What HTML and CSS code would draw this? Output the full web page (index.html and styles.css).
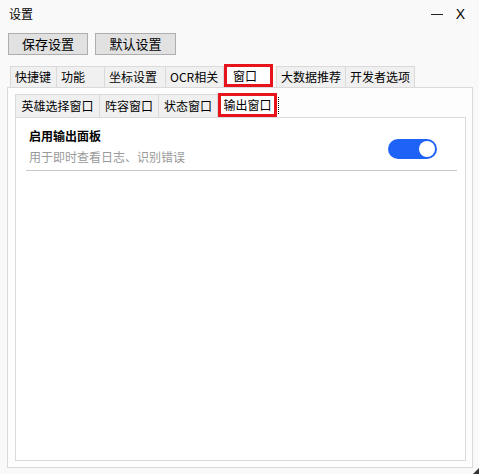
FILE: index.html
```html
<!DOCTYPE html>
<html lang="zh">
<head>
    <meta charset="UTF-8">
    <title>设置</title>
    <link rel="stylesheet" href="styles.css">
</head>
<body>
    <div class="window">
        <div class="titlebar">
            <span class="title">设置</span>
            <div class="controls">
                <span class="min"></span>
                <span class="close">X</span>
            </div>
        </div>

        <div class="toolbar">
            <button class="btn btn-save">保存设置</button>
            <button class="btn btn-default">默认设置</button>
        </div>

        <!-- 顶层标签页 -->
        <div class="tabs">
            <div class="tab-strip top">
                <div class="tab" style="width: 47px">快捷键</div>
                <div class="tab" style="width: 48px">功能</div>
                <div class="tab" style="width: 61px">坐标设置</div>
                <div class="tab" style="width: 58px">OCR相关</div>
                <div class="tab active" style="width: 49px">窗口</div>
                <div class="tab after-active" style="width: 70px">大数据推荐</div>
                <div class="tab" style="width: 69px">开发者选项</div>
            </div>
            <div class="pane">
                <!-- 窗口子标签页 -->
                <div class="tab-strip sub">
                    <div class="tab" style="width: 85px">英雄选择窗口</div>
                    <div class="tab" style="width: 59px">阵容窗口</div>
                    <div class="tab" style="width: 59px">状态窗口</div>
                    <div class="tab active focus" style="width: 59px">输出窗口</div>
                </div>
                <div class="pane inner">
                    <div class="setting-row">
                        <div class="setting-text">
                            <div class="setting-title">启用输出面板</div>
                            <div class="setting-desc">用于即时查看日志、识别错误</div>
                        </div>
                        <div class="toggle on"><span class="knob"></span></div>
                    </div>
                </div>
            </div>
        </div>

        <svg class="grip" width="6" height="6" viewBox="0 0 6 6"><path d="M6 0 V6 H0 Z" fill="#333"/></svg>
    </div>
</body>
</html>
```

FILE: styles.css
```css
body {
    margin: 0;
    font-family: "Noto Sans CJK SC", "Noto Sans", sans-serif;
    font-size: 12px;
    color: #000;
    background-color: #fff;
}

.window {
    position: relative;
    height: 474px;
    background-color: #f9f9f9; /* 窗体背景 */
    overflow: hidden;
}

.titlebar {
    height: 28px;
    display: flex;
    align-items: center;
    justify-content: space-between;
    padding: 0 14px 0 9px;
}

.title {
    line-height: 16px;
}

.controls {
    display: flex;
    align-items: center;
    gap: 13px;
}

.controls .min {
    width: 12px;
    height: 1px;
    background-color: #222;
    margin-top: 1px;
}

.controls .close {
    font-family: "Liberation Sans", Arial, sans-serif;
    font-size: 14px;
    line-height: 16px;
}

.toolbar {
    display: flex;
    gap: 7px;
    padding: 5px 0 0 8px;
}

.btn {
    height: 22px;
    padding: 0;
    border: 1px solid #adadad;
    background-color: #e1e1e1;
    font-family: inherit;
    font-size: 13px;
    line-height: 18px;
    color: #000;
}

.btn-save { width: 80px; }
.btn-default { width: 81px; }

/* 标签页 */
.tabs {
    margin: 9px 6px 0 7px;
}

.tab-strip {
    display: flex;
    align-items: flex-end;
    height: 23px;
    padding-left: 3px;
}

.tab {
    box-sizing: border-box;
    height: 21px;
    border: 1px solid #dadada;
    border-bottom: none;
    background-color: #f0f0f0;
    line-height: 20px;
    text-align: center;
    white-space: nowrap;
}

.tab-strip.top .tab {
    text-align: left;
    padding-left: 4px;
}

.tab + .tab {
    border-left: none;
}

.tab.active {
    height: 23px;
    border: 3px solid #e8141c; /* 红框标注 */
    background-color: #fff;
    line-height: 17px;
    position: relative;
    z-index: 1;
}

.tab-strip.top .tab.active {
    padding-left: 6px;
}

.tab.after-active {
    margin-left: 3px;
}

.tab-strip.top .tab.after-active {
    border-left: 1px solid #dadada;
}

.pane {
    box-sizing: border-box;
    height: 381px;
    border: 1px solid #dadada;
    background-color: #fdfdfd;
    padding: 4px 6px 6px 7px;
}

.tab-strip.sub {
    height: 25px;
    padding-left: 0;
}

.tab-strip.sub .tab {
    height: 23px;
    line-height: 22px;
}

.tab-strip.sub .tab.active {
    height: 24px;
    line-height: 18px;
}

.tab.focus::after {
    content: "";
    position: absolute;
    top: 1px;
    right: -5px;
    height: 17px;
    border-right: 1px dotted #000;
}

.pane.inner {
    height: 344px;
    padding: 0;
    background-color: #fff;
}

/* 设置项 */
.setting-row {
    display: flex;
    align-items: center;
    margin: 0 8px 0 10px;
    padding: 10px 20px 5px 3px;
    border-bottom: 1px solid #c8c8c8;
}

.setting-text {
    flex: 1;
}

.setting-title {
    font-weight: bold;
    line-height: 16px;
}

.setting-desc {
    margin-top: 5px;
    color: #9a9a9a;
    line-height: 16px;
}

.toggle {
    box-sizing: border-box;
    width: 49px;
    height: 20px;
    margin-top: 5px;
    border-radius: 10px;
    background-color: #ccc;
    display: flex;
    align-items: center;
    padding: 0 2px;
}

.toggle.on {
    background-color: #1e63f5;
    justify-content: flex-end;
}

.knob {
    width: 16px;
    height: 16px;
    border-radius: 50%;
    background-color: #fff;
}

.grip {
    position: absolute;
    right: 0;
    bottom: 0;
}
```
